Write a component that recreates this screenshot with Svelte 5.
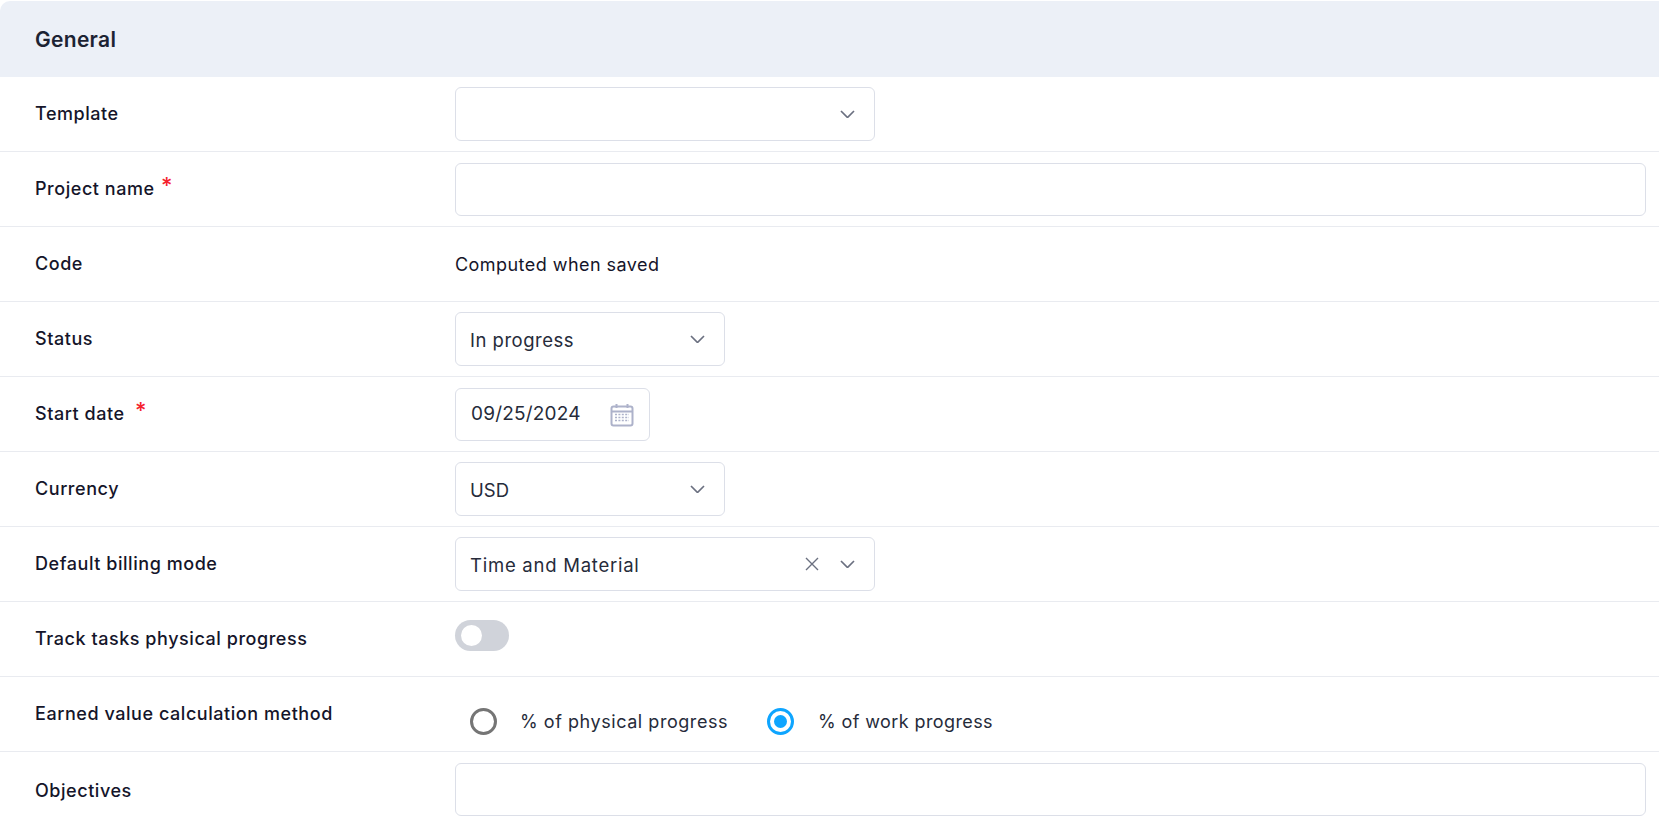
<script>
  const chevron = "M1 1l6.5 6.5L14 1";
</script>

<div class="form">
  <header class="head"><h2>General</h2></header>

  <div class="row">
    <span class="label">Template</span>
    <div class="field select wide">
      <span class="value"></span>
      <svg class="chev" viewBox="0 0 15 8.5"><path d={chevron} /></svg>
    </div>
  </div>

  <div class="row">
    <span class="label">Project name <i class="req">*</i></span>
    <div class="field full"></div>
  </div>

  <div class="row">
    <span class="label">Code</span>
    <span class="static">Computed when saved</span>
  </div>

  <div class="row">
    <span class="label">Status</span>
    <div class="field select mid">
      <span class="value">In progress</span>
      <svg class="chev" viewBox="0 0 15 8.5"><path d={chevron} /></svg>
    </div>
  </div>

  <div class="row">
    <span class="label">Start date <i class="req gap">*</i></span>
    <div class="field date">
      <span class="datev">09/25/2024</span>
      <svg class="cal" viewBox="0 0 24 24">
        <rect x="1.5" y="3.5" width="21" height="19" rx="2" class="calo" />
        <path d="M1.5 8.5h21M6.5 1v4M17.5 1v4" class="calo" />
        <path d="M5 11.5h14M5 14.5h14M5 17.5h14" class="cald" />
      </svg>
    </div>
  </div>

  <div class="row">
    <span class="label">Currency</span>
    <div class="field select mid">
      <span class="value tight">USD</span>
      <svg class="chev" viewBox="0 0 15 8.5"><path d={chevron} /></svg>
    </div>
  </div>

  <div class="row">
    <span class="label">Default billing mode</span>
    <div class="field select wide">
      <span class="value loose">Time and Material</span>
      <svg class="x" viewBox="0 0 14 14"><path d="M1 1l12 12M13 1L1 13" /></svg>
      <svg class="chev" viewBox="0 0 15 8.5"><path d={chevron} /></svg>
    </div>
  </div>

  <div class="row">
    <span class="label">Track tasks physical progress</span>
    <div class="toggle"><span class="knob"></span></div>
  </div>

  <div class="row">
    <span class="label">Earned value calculation method</span>
    <div class="radios">
      <span class="radio"></span>
      <span class="rtext first">% of physical progress</span>
      <span class="radio on"><span class="dot"></span></span>
      <span class="rtext second">% of work progress</span>
    </div>
  </div>

  <div class="row last">
    <span class="label">Objectives</span>
    <div class="field full"></div>
  </div>
</div>

<style>
  :global(body) {
    margin: 0;
    background: #fff;
  }
  .form {
    font-family: Inter, "Liberation Sans", sans-serif;
    color: #15152a;
    height: 827px;
    overflow: hidden;
    padding-top: 1px;
    box-sizing: border-box;
  }
  .head {
    height: 76px;
    background: #ecf0f7;
    border-radius: 10px 0 0 0;
    display: flex;
    align-items: center;
    padding: 0 35px;
    box-sizing: border-box;
  }
  h2 {
    margin: 0;
    font-size: 21px;
    font-weight: 600;
    letter-spacing: 0.3px;
    color: #1c2333;
  }
  .row {
    height: 75px;
    box-sizing: border-box;
    border-bottom: 1px solid #e9ebf0;
    display: grid;
    grid-template-columns: 420px 1fr;
    align-items: center;
    padding: 0 13px 0 35px;
  }
  .row.last {
    border-bottom: 0;
  }
  .label {
    font-size: 18px;
    font-weight: 450;
    letter-spacing: 0.55px;
    position: relative;
    top: -1px;
  }
  .row.last .label {
    top: 1px;
  }
  .req {
    color: #f5222d;
    font-style: normal;
    font-size: 22px;
    line-height: 0;
    position: relative;
    top: -2px;
    left: 1px;
  }
  .req.gap {
    left: 5px;
  }
  .field {
    height: 53px;
    box-sizing: border-box;
    border: 1px solid #dcdfe8;
    border-radius: 6px;
    background: #fff;
    display: flex;
    align-items: center;
  }
  .full {
    width: 100%;
  }
  .wide {
    width: 420px;
  }
  .mid {
    width: 270px;
  }
  .select {
    height: 54px;
    padding: 0 19px 0 14px;
    font-size: 18.5px;
    letter-spacing: 0.5px;
    color: #262b3a;
  }
  .value {
    flex: 1;
    position: relative;
    top: 1px;
  }
  .value.tight {
    letter-spacing: 0;
  }
  .value.loose {
    letter-spacing: 0.75px;
  }
  .chev {
    width: 15px;
    height: 8.5px;
    fill: none;
    stroke: #6b7080;
    stroke-width: 1.7;
  }
  .x {
    width: 14px;
    height: 14px;
    fill: none;
    stroke: #6b7080;
    stroke-width: 1.4;
    margin-right: 21px;
  }
  .static {
    font-size: 18px;
    letter-spacing: 0.45px;
  }
  .date {
    width: 195px;
    padding: 0 15px;
    justify-content: space-between;
    font-size: 19px;
    letter-spacing: 0.2px;
    color: #262b3a;
  }
  .datev {
    position: relative;
    top: -1px;
  }
  .cal {
    width: 24px;
    height: 24px;
    fill: none;
    flex: none;
    position: relative;
    top: 1px;
  }
  .calo {
    stroke: #adb2ca;
    stroke-width: 2;
    fill: none;
  }
  .cald {
    stroke: #adb2ca;
    stroke-width: 1.6;
    stroke-dasharray: 2 1.4;
  }
  .toggle {
    width: 54px;
    height: 31px;
    border-radius: 16px;
    background: #d0d3da;
    position: relative;
    top: -4px;
  }
  .knob {
    position: absolute;
    left: 6px;
    top: 5px;
    width: 21px;
    height: 21px;
    border-radius: 50%;
    background: #fff;
  }
  .radios {
    display: flex;
    align-items: center;
    padding-left: 15px;
    position: relative;
    top: 7px;
  }
  .radio {
    width: 27px;
    height: 27px;
    box-sizing: border-box;
    border: 3px solid #757575;
    border-radius: 50%;
    display: flex;
    align-items: center;
    justify-content: center;
    margin-right: 23px;
    flex: none;
  }
  .radio.on {
    border-color: #0ea5ff;
    margin-right: 24px;
  }
  .dot {
    width: 13px;
    height: 13px;
    background: #0ea5ff;
    border-radius: 50%;
  }
  .rtext {
    font-size: 18px;
    letter-spacing: 0.55px;
    color: #262b3a;
  }
  .rtext.first {
    margin-right: 39px;
  }
  .rtext.second {
    letter-spacing: 0.4px;
  }
</style>
